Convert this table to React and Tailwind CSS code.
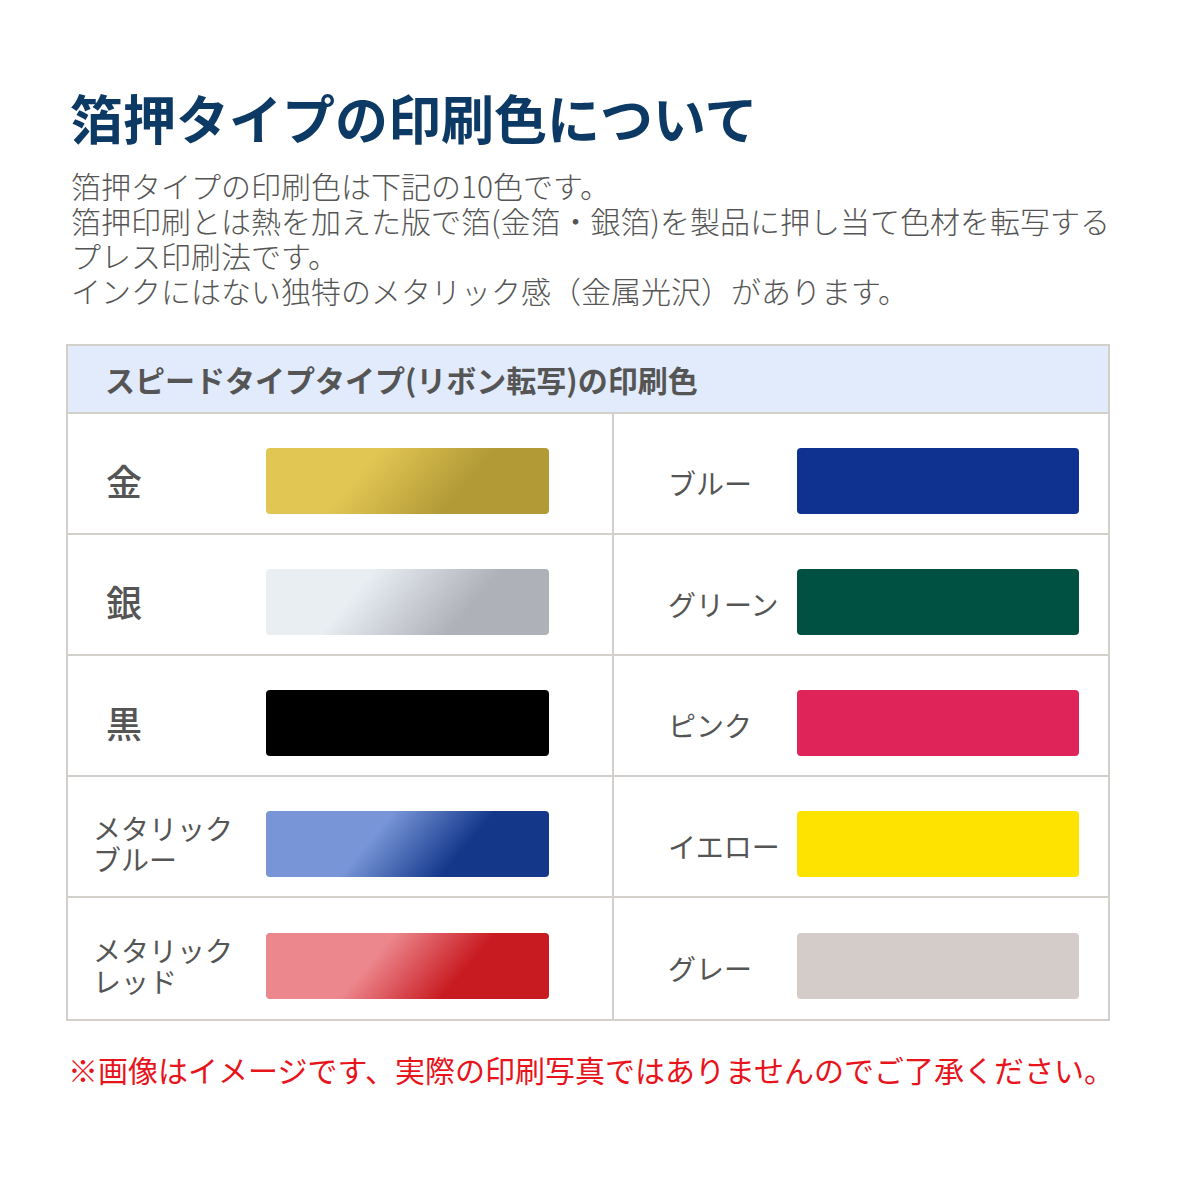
import React from "react";

const leftRows = [
  { label: "金", big: true, swatch: "bg-[linear-gradient(130deg,#e2c653_0%,#e2c653_34%,#b29a37_68%,#b29a37_100%)]" },
  { label: "銀", big: true, swatch: "bg-[linear-gradient(130deg,#e9eef3_0%,#e9eef3_32%,#aeb1b8_70%,#aeb1b8_100%)]" },
  { label: "黒", big: true, swatch: "bg-black" },
  { label: ["メタリック", "ブルー"], swatch: "bg-[linear-gradient(130deg,#7795d7_0%,#7795d7_38%,#14378a_68%,#14378a_100%)]" },
  { label: ["メタリック", "レッド"], swatch: "bg-[linear-gradient(130deg,#ec878d_0%,#ec878d_38%,#c81b21_68%,#c81b21_100%)]" },
];

const rightRows = [
  { label: "ブルー", swatch: "bg-[#0f3190]" },
  { label: "グリーン", swatch: "bg-[#005142]" },
  { label: "ピンク", swatch: "bg-[#de2459]" },
  { label: "イエロー", swatch: "bg-[#ffe300]" },
  { label: "グレー", swatch: "bg-[#d4ccc9]" },
];

const font = "font-['Noto_Sans_CJK_JP','Noto_Sans',sans-serif]";

const App = () => {
  return (
    <div className={`w-[1200px] h-[1200px] bg-white ${font}`}>
      <div className="pt-[87px]">
        {/* Title */}
        <h1 className="ml-[70px] text-[53px] leading-[60px] font-bold text-[#0c3a64]">
          箔押タイプの印刷色について
        </h1>

        {/* Intro */}
        <p className="ml-[71px] mt-[21px] text-[30px] leading-[35px] font-light text-[#555555]">
          箔押タイプの印刷色は下記の10色です。
          <br />
          箔押印刷とは熱を加えた版で箔(金箔・銀箔)を製品に押し当て色材を転写する
          <br />
          プレス印刷法です。
          <br />
          インクにはない独特のメタリック感（金属光沢）があります。
        </p>

        {/* Table */}
        <div className="ml-[66px] mt-[36px] w-[1044px] border-2 border-[#d3cfcb]">
          <div className="h-[68px] flex items-center pl-[37px] bg-[#e2ebfb] border-b-2 border-[#d3cfcb]">
            <span className="text-[30px] leading-[36px] font-bold text-[#555555]">
              スピードタイプタイプ(リボン転写)の印刷色
            </span>
          </div>

          <div className="grid grid-cols-[546px_1fr]">
            {leftRows.map((row, i) => (
              <React.Fragment key={i}>
                <div
                  className={`h-[121px] pt-[14px] flex items-center border-r-2 border-[#d3cfcb] ${
                    i < 4 ? "border-b-2" : ""
                  }`}
                >
                  <div className="w-[198px] shrink-0">
                    {row.big ? (
                      <span className="pl-[38px] text-[36px] leading-[40px] font-medium text-[#555555]">
                        {row.label}
                      </span>
                    ) : (
                      <div className="pl-[25px] text-[28px] text-[#555555]">
                        <div className="leading-[31px]">{row.label[0]}</div>
                        <div className="leading-[31px]">{row.label[1]}</div>
                      </div>
                    )}
                  </div>
                  <div className={`w-[283px] h-[66px] rounded ${row.swatch}`} />
                </div>
                <div
                  className={`h-[121px] pt-[14px] flex items-center ${
                    i < 4 ? "border-b-2 border-[#d3cfcb]" : ""
                  }`}
                >
                  <div className="w-[183px] shrink-0 pl-[54px] pt-[4px] text-[28px] text-[#555555]">
                    {rightRows[i].label}
                  </div>
                  <div className={`w-[282px] h-[66px] rounded ${rightRows[i].swatch}`} />
                </div>
              </React.Fragment>
            ))}
          </div>
        </div>

        {/* Note */}
        <p className="ml-[68px] mt-[30px] text-[30px] leading-[36px] text-[#e8141c]">
          ※画像はイメージです、実際の印刷写真ではありませんのでご了承ください。
        </p>
      </div>
    </div>
  );
};

export default App;
